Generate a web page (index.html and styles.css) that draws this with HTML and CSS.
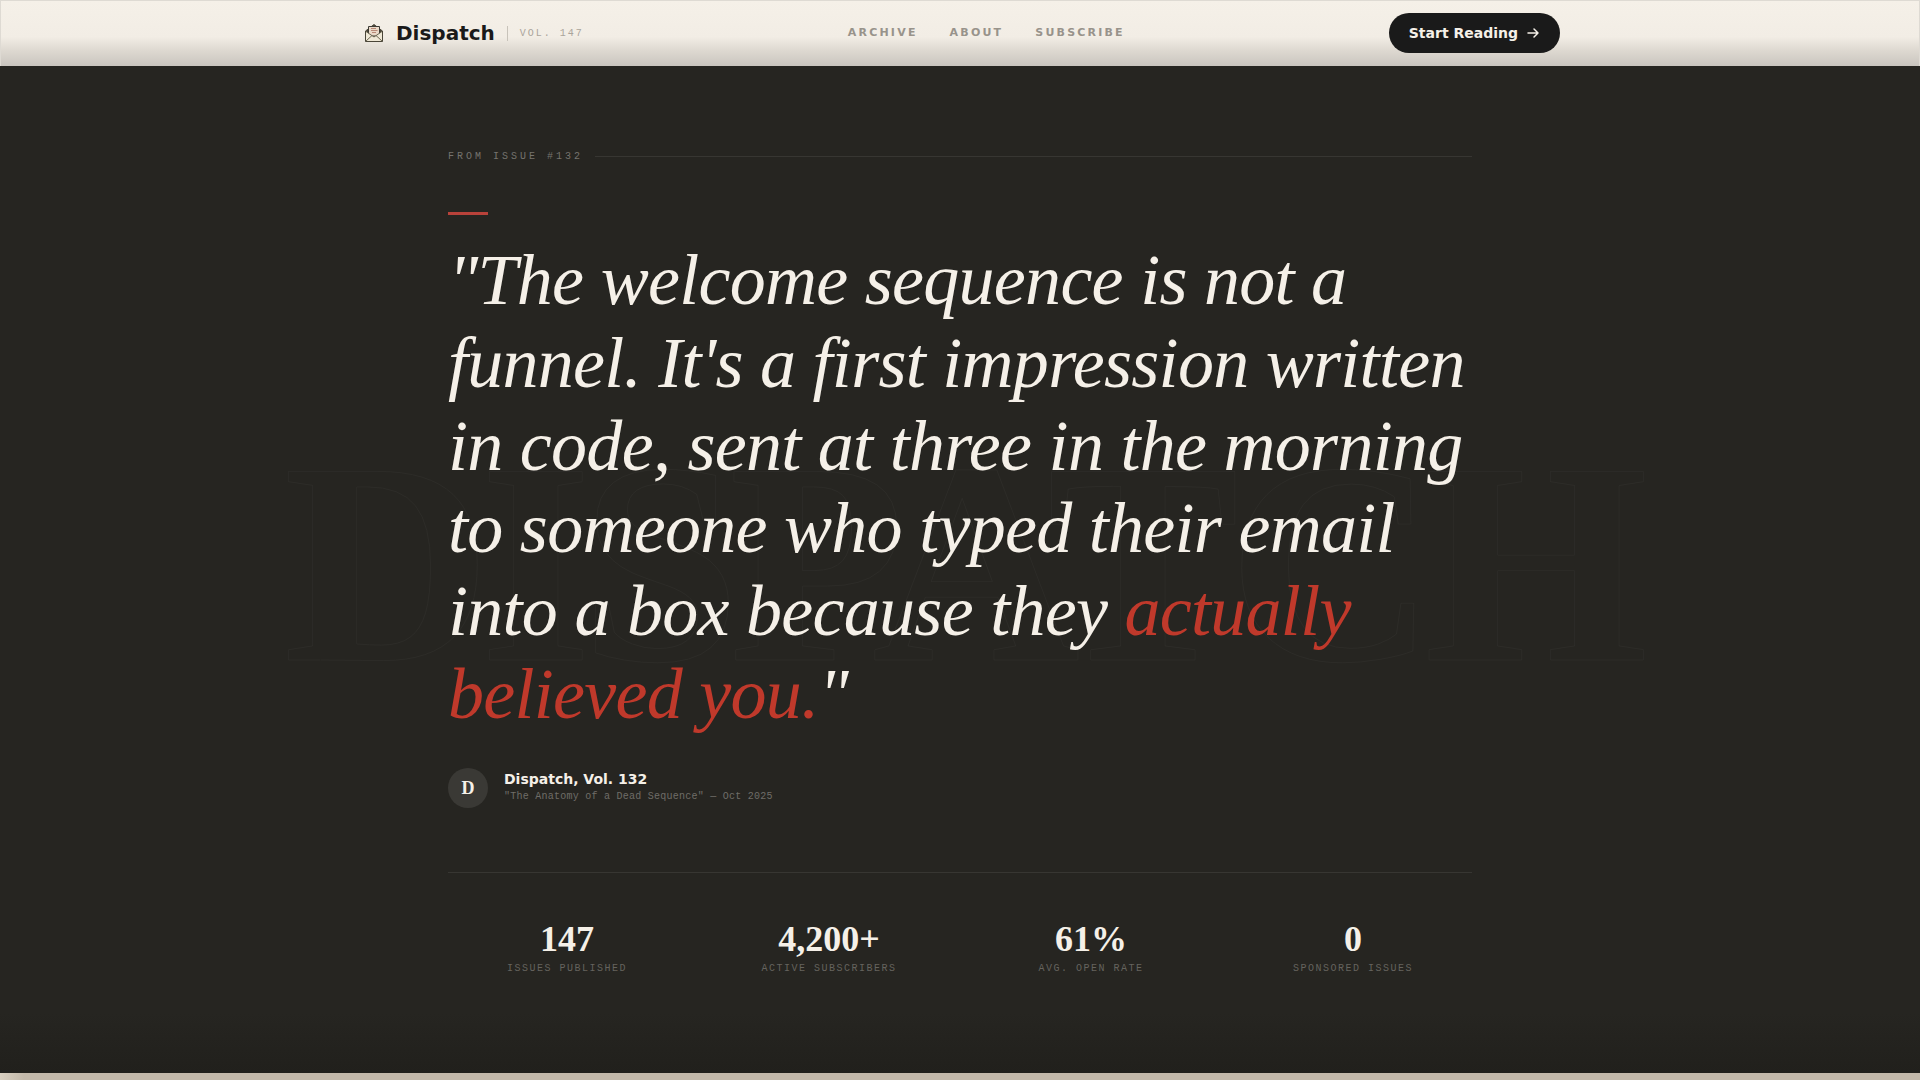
FILE: index.html
```
<!DOCTYPE html>
<html lang="en">
<head>
  <meta charset="UTF-8">
  <meta name="viewport" content="width=device-width, initial-scale=1.0">
  <title>Dispatch</title>
  <link rel="stylesheet" href="styles.css">
</head>
<body>
<header class="nav">
  <div class="nav-inner">
    <a class="brand" href="#">
      <svg class="brand-icon" viewBox="0 0 20 20" aria-hidden="true">
        <path d="M1.5 8 L10 1.5 L18.5 8 V18.5 H1.5 Z" fill="#4a4638" stroke="#4a4638" stroke-linejoin="round"/>
        <path d="M4.5 3.5 H15.5 V13 H4.5 Z" fill="#ead9c8" stroke="#3c3a34"/>
        <path d="M7 5.5 H12 M7 7.5 H13.5 M8 9.5 H12" stroke="#b98a78" fill="none"/>
        <path d="M2 8.5 L10 14 L18 8.5 V18 H2 Z" fill="#efe8d6"/>
        <path d="M2 8.5 L10 14 L18 8.5 M2 18 L8 12.5 M18 18 L12 12.5" fill="none" stroke="#6d6753"/>
      </svg>
      <span class="brand-name">Dispatch</span>
      <span class="brand-vol">Vol. 147</span>
    </a>
    <nav class="links">
      <a href="#archive">Archive</a>
      <a href="#about">About</a>
      <a href="#subscribe">Subscribe</a>
    </nav>
    <button class="cta" type="button">
      Start Reading
      <svg class="arrow" viewBox="0 0 14 14" aria-hidden="true">
        <path d="M2 7 H12 M8 3 L12 7 L8 11"/>
      </svg>
    </button>
  </div>
</header>

<section class="feature">
  <div class="watermark" aria-hidden="true">DISPATCH</div>
  <div class="feature-inner">
    <div class="issue">From Issue #132</div>
    <div class="accent"></div>
    <blockquote class="quote">"The welcome sequence is not a funnel. It's a first impression written in code, sent at three in the morning to someone who typed their email into a box because they <em>actually believed you.</em>"</blockquote>
    <div class="author">
      <div class="avatar">D</div>
      <div>
        <div class="author-name">Dispatch, Vol. 132</div>
        <div class="author-source">"The Anatomy of a Dead Sequence" — Oct 2025</div>
      </div>
    </div>
    <div class="stats">
      <div class="stat"><strong>147</strong><span>Issues Published</span></div>
      <div class="stat"><strong>4,200+</strong><span>Active Subscribers</span></div>
      <div class="stat"><strong>61%</strong><span>Avg. Open Rate</span></div>
      <div class="stat"><strong>0</strong><span>Sponsored Issues</span></div>
    </div>
  </div>
</section>
<div class="next"></div>
</body>
</html>
```
FILE: styles.css
```
* {
  box-sizing: border-box;
}

body {
  margin: 0;
  height: 100vh;
  overflow: hidden;
  display: flex;
  flex-direction: column;
  background: #f5f0e8;
  color: #1a1a1a;
  font-family: "DejaVu Sans", sans-serif;
}

.nav {
  border: 1px solid #dedad3;
  border-bottom: 0;
  background: linear-gradient(#f5f0e8 0, #f2ede5 36px, #ddd8d0 50px, #c9c5bf 100%);
}

.nav-inner {
  max-width: 1200px;
  margin: 0 auto;
  padding: 12px 0 13px;
  display: flex;
  align-items: center;
  justify-content: space-between;
}

.brand {
  display: flex;
  align-items: center;
  color: inherit;
  text-decoration: none;
  padding-left: 4px;
}

.brand-icon {
  width: 20px;
  height: 20px;
  margin-right: 12px;
}

.brand-name {
  font-size: 20px;
  font-weight: 700;
}

.brand-vol {
  margin-left: 12px;
  padding-left: 12px;
  border-left: 1px solid #c8c3ba;
  color: #aaa49b;
  font: 10px/15px "Liberation Mono", monospace;
  letter-spacing: 0.2em;
  text-transform: uppercase;
}

.links {
  display: flex;
  gap: 32px;
}

.links a {
  color: #98938b;
  font-size: 11px;
  font-weight: 700;
  line-height: 16px;
  letter-spacing: 0.2em;
  text-transform: uppercase;
  text-decoration: none;
}

.cta {
  display: flex;
  align-items: center;
  gap: 8px;
  height: 40px;
  padding: 0 20px;
  border: 0;
  border-radius: 20px;
  background: #1a1a1a;
  color: #f5f0e8;
  font: 700 14px/20px "DejaVu Sans", sans-serif;
}

.arrow {
  width: 14px;
  height: 14px;
  fill: none;
  stroke: currentColor;
  stroke-width: 1.5;
  stroke-linecap: round;
  stroke-linejoin: round;
}

.feature {
  position: relative;
  flex: 1;
  overflow: hidden;
  background: linear-gradient(#262521 0, #262521 calc(100% - 60px), #21201c 100%);
  color: #f5f0e8;
}

/* oversized outlined wordmark behind the quote */
.watermark {
  position: absolute;
  inset: 0;
  display: flex;
  align-items: center;
  justify-content: center;
  padding-bottom: 14px;
  color: transparent;
  font: 700 15vw/1 "Liberation Serif", serif;
  letter-spacing: -0.04em;
  -webkit-text-stroke: 1px rgba(255, 255, 255, 0.03);
}

.feature-inner {
  position: relative;
  max-width: 1024px;
  margin: 0 auto;
  padding-top: 82px;
}

.issue {
  display: flex;
  align-items: center;
  gap: 12px;
  color: #75736e;
  font: 10px/17px "Liberation Mono", monospace;
  letter-spacing: 0.3em;
  text-transform: uppercase;
}

.issue::after {
  content: "";
  flex: 1;
  height: 1px;
  background: #373632;
}

.accent {
  width: 40px;
  height: 3px;
  margin: 47px 0 24px;
  background: #b8423a;
}

.quote {
  margin: 0;
  font: italic 72px/1.15 "Liberation Serif", serif;
  letter-spacing: -0.01em;
}

.quote em {
  color: #c0392b;
}

.author {
  display: flex;
  align-items: center;
  gap: 16px;
  margin-top: 32px;
}

.avatar {
  width: 40px;
  height: 40px;
  border-radius: 50%;
  background: #3a3935;
  font: 700 18px/40px "Liberation Serif", serif;
  text-align: center;
}

.author-name {
  font-size: 14px;
  font-weight: 700;
  line-height: 18px;
}

.author-source {
  color: #6f6d68;
  font: 10px/17px "Liberation Mono", monospace;
  letter-spacing: 0.025em;
}

.stats {
  display: grid;
  grid-template-columns: repeat(4, 1fr);
  gap: 24px;
  margin-top: 64px;
  padding-top: 48px;
  border-top: 1px solid #373632;
  text-align: center;
}

.stat strong {
  display: block;
  font: 700 36px/36px "Liberation Serif", serif;
}

.stat span {
  display: block;
  margin-top: 4px;
  color: #65635e;
  font: 10px/16px "Liberation Mono", monospace;
  letter-spacing: 0.15em;
  text-transform: uppercase;
}

.next {
  height: 7px;
  background: linear-gradient(90deg, #d8cfc0 0, #c3b9aa 24px);
}
```
